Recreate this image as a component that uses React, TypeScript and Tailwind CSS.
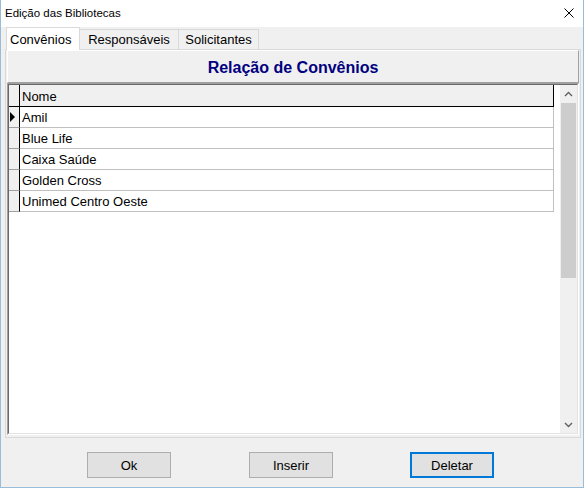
import React from "react";

const rows = ["Amil", "Blue Life", "Caixa Saúde", "Golden Cross", "Unimed Centro Oeste"];

function Chevron({ up }: { up: boolean }) {
  return (
    <svg width="9" height="6" viewBox="0 0 9 6" className="block">
      <path
        d={up ? "M1 5 L4.5 1.5 L8 5" : "M1 1 L4.5 4.5 L8 1"}
        fill="none"
        stroke="#606060"
        strokeWidth="1.4"
      />
    </svg>
  );
}

export default function App() {
  return (
    <div className="w-[584px] h-[488px] bg-[#f0f0f0] border-l border-r border-b border-[#99bcd8] flex flex-col font-['Liberation_Sans',Arial,sans-serif] text-black overflow-hidden">
      {/* Title bar */}
      <div className="h-[27px] bg-white flex items-center justify-between pl-[4px] pr-[9px] shrink-0">
        <span className="text-[11.5px] text-black leading-none">Edição das Bibliotecas</span>
        <svg width="10" height="10" viewBox="0 0 10 10" className="block mb-[1px]">
          <path d="M0.5 0.5 L9.5 9.5 M9.5 0.5 L0.5 9.5" stroke="#000" strokeWidth="1" />
        </svg>
      </div>

      {/* Tabs */}
      <div className="flex items-start h-[22px] pl-[5px] shrink-0">
        <div className="relative z-10 h-[23px] w-[74px] bg-white border-t border-l border-r border-[#d9d9d9] pl-[3px] flex items-center text-[13px] leading-none">
          Convênios
        </div>
        <div className="mt-[2px] h-[20px] w-[99px] border-t border-r border-[#d9d9d9] flex items-center justify-center text-[13px] leading-none">
          Responsáveis
        </div>
        <div className="mt-[2px] h-[20px] w-[80px] border-t border-r border-[#d9d9d9] flex items-center justify-center text-[13px] leading-none">
          Solicitantes
        </div>
      </div>

      {/* Tab panel */}
      <div className="ml-[4px] mr-[2px] h-[389px] border border-[#d9d9d9] px-[1px] pb-[2px] flex flex-col shrink-0">
        {/* header panel */}
        <div className="h-[33px] shrink-0 border-t border-l border-white border-b border-r border-b-[#a0a0a0] border-r-[#a0a0a0] flex items-center justify-center pt-[3px]">
          <span className="text-[16px] font-bold text-[#000080] leading-none">Relação de Convênios</span>
        </div>
        {/* grid */}
        <div className="h-[352px] border-t border-l border-t-[#a0a0a0] border-l-[#a0a0a0] border-b border-r border-b-white border-r-white">
          <div className="h-full border-t border-l border-t-[#696969] border-l-[#696969] border-b border-r border-b-[#e3e3e3] border-r-[#e3e3e3] bg-white flex">
            <div className="w-[545px] flex flex-col">
              {/* header row */}
              <div className="h-[22px] flex border-b border-black bg-[#f0f0f0]">
                <div className="w-[11px] border-r border-black" />
                <div className="w-[534px] border-r border-black pl-[2px] pt-[2px] flex items-center text-[13px] leading-none">
                  Nome
                </div>
              </div>
              {rows.map((r, i) => (
                <div key={r} className="h-[21px] flex">
                  <div className="w-[11px] border-r border-black bg-[#f0f0f0] border-b border-b-[#a0a0a0] flex items-center">
                    {i === 0 && (
                      <svg width="6" height="10" viewBox="0 0 6 10" className="block ml-[1px]">
                        <path d="M0 0 L5 5 L0 10 Z" fill="#000" />
                      </svg>
                    )}
                  </div>
                  <div className="w-[534px] border-r border-b border-[#c0c0c0] pl-[2px] flex items-center text-[13px] leading-none">
                    {r}
                  </div>
                </div>
              ))}
            </div>
            <div className="w-[6px]" />
            {/* scrollbar */}
            <div className="w-[17px] h-full bg-[#f0f0f0] flex flex-col">
              <div className="h-[17px] flex items-center justify-center shrink-0">
                <Chevron up />
              </div>
              <div className="mt-[1px] h-[175px] mx-[1px] bg-[#cdcdcd] shrink-0" />
              <div className="flex-1" />
              <div className="h-[17px] flex items-center justify-center shrink-0">
                <Chevron up={false} />
              </div>
            </div>
          </div>
        </div>
      </div>

      {/* Buttons */}
      <div className="flex mt-[14px] shrink-0">
        <button className="ml-[86px] w-[84px] h-[26px] bg-[#e1e1e1] border border-[#adadad] text-[13px] leading-none">
          Ok
        </button>
        <button className="ml-[78px] w-[84px] h-[26px] bg-[#e1e1e1] border border-[#adadad] text-[13px] leading-none">
          Inserir
        </button>
        <button className="ml-[77px] w-[84px] h-[26px] bg-[#e1e1e1] border-2 border-[#0078d7] text-[13px] leading-none">
          Deletar
        </button>
      </div>
    </div>
  );
}
